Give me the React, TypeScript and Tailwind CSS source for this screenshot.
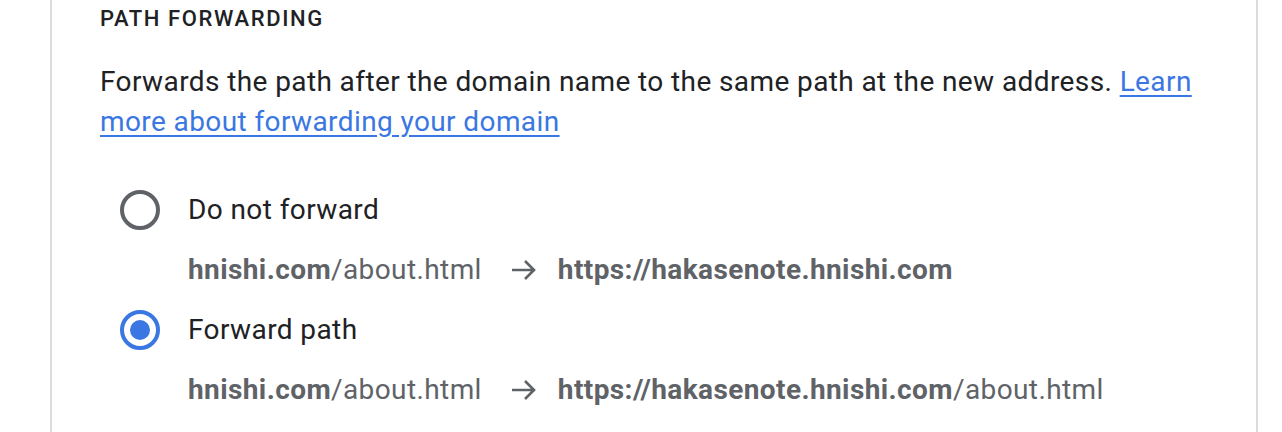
const ROBOTO = { fontFamily: 'Roboto, "Liberation Sans", Arial, sans-serif' }

function Arrow() {
  return (
    <svg width="26" height="24" viewBox="0 0 26 24" className="ml-[29px] mr-[21px] shrink-0 text-[#5f6368]">
      <path d="M1 12H24M14 3L23 12L14 21" fill="none" stroke="currentColor" strokeWidth="2.6" />
    </svg>
  )
}

function Radio({ checked }: { checked: boolean }) {
  return checked ? (
    <span className="flex h-10 w-10 shrink-0 items-center justify-center rounded-full border-4 border-[#3a77e2]">
      <span className="h-5 w-5 rounded-full bg-[#3a77e2]" />
    </span>
  ) : (
    <span className="h-10 w-10 shrink-0 rounded-full border-4 border-[#5f6368]" />
  )
}

function Example({ target, path }: { target: string; path?: string }) {
  return (
    <div className="flex h-10 items-center pl-[88px] text-[28px] tracking-[0.4px] text-[#5f6368]">
      <span>
        <b className="font-bold">hnishi.com</b>/about.html
      </span>
      <Arrow />
      <span>
        <b className="font-bold">{target}</b>
        {path}
      </span>
    </div>
  )
}

export default function App() {
  return (
    <main className="h-[432px] overflow-hidden bg-white" style={ROBOTO}>
      <section className="ml-[50px] h-full w-[1208px] border-x-2 border-[#dadce0] pl-[48px] pr-[48px]">
        <h2 className="pt-[3px] text-[22px] leading-8 font-medium tracking-[1.6px] text-[#202124]">
          PATH FORWARDING
        </h2>
        <p className="mt-[27px] text-[28px] leading-10 tracking-[0.4px] text-[#202124]">
          Forwards the path after the domain name to the same path at the new address.{' '}
          <a href="#" className="text-[#3a77e2] underline underline-offset-4">
            Learn more about forwarding your domain
          </a>
        </p>

        <div className="mt-12 flex flex-col gap-5">
          <label className="flex h-10 items-center gap-7 pl-5 text-[28px] tracking-[0.4px] text-[#202124]">
            <Radio checked={false} />
            <span>Do not forward</span>
          </label>
          <Example target="https://hakasenote.hnishi.com" />
          <label className="flex h-10 items-center gap-7 pl-5 text-[28px] tracking-[0.4px] text-[#202124]">
            <Radio checked />
            <span>Forward path</span>
          </label>
          <Example target="https://hakasenote.hnishi.com" path="/about.html" />
        </div>
      </section>
    </main>
  )
}
